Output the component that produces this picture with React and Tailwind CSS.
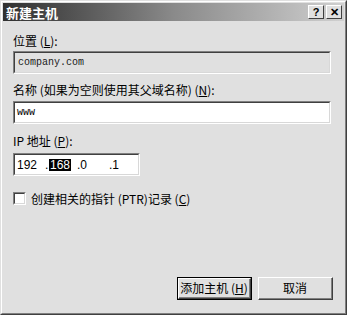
import React from 'react';

const cjk = { fontFamily: '"Noto Sans CJK SC", "Noto Sans", sans-serif' };
const mono = { fontFamily: '"Liberation Mono", "DejaVu Sans Mono", monospace' };

function Sunken({ className = '', children }) {
  return (
    <div className={`border-t border-l border-[#808080] border-b border-r border-b-white border-r-white ${className}`}>
      <div className={`h-full border-t border-l border-[#404040] border-b border-r border-b-[#d8d8d8] border-r-[#d8d8d8]`}>
        {children}
      </div>
    </div>
  );
}

function Btn({ children, def }) {
  return (
    <div className={`w-[75px] h-[23px] ${def ? 'border border-black' : ''}`}>
      <div className="h-full border-t border-l border-white border-b border-r border-b-[#404040] border-r-[#404040]">
        <div className="h-full flex items-center justify-center border-b border-r border-[#808080] text-[12px] text-black" style={cjk}>
          {children}
        </div>
      </div>
    </div>
  );
}

function TitleBtn({ children }) {
  return (
    <div className="w-[16px] h-[14px] bg-[#e0e0e0] border-t border-l border-white border-b border-r border-b-[#404040] border-r-[#404040] flex items-center justify-center text-[11px] font-bold leading-none text-black" style={{ fontFamily: '"Liberation Sans", sans-serif' }}>
      {children}
    </div>
  );
}

export default function App() {
  return (
    <div className="w-[347px] h-[315px] bg-[#e0e0e0] border-t border-l border-[#e0e0e0] border-b border-r border-b-[#404040] border-r-[#404040]">
      <div className="h-full border-t border-l border-white border-b border-r border-b-[#808080] border-r-[#808080] p-[1px] flex flex-col">
        <div className="h-[18px] bg-gradient-to-r from-[#303030] via-[#8a8a8a] to-[#d0d0d0] flex items-center justify-between pl-[3px] pr-[2px]">
          <span className="text-white text-[13px] font-bold leading-none" style={cjk}>新建主机</span>
          <div className="flex gap-[2px]">
            <TitleBtn>?</TitleBtn>
            <TitleBtn>✕</TitleBtn>
          </div>
        </div>

        <div className="flex-1 flex flex-col px-[10px] pt-[14px] text-[12px] text-black leading-none" style={cjk}>
          <div className="h-[14px]">位置 (<u>L</u>):</div>
          <Sunken className="mt-[2px] h-[23px] mr-[3px]">
            <div className="h-full flex items-center pl-[3px] text-[10px] text-[#202020]" style={mono}>company.com</div>
          </Sunken>

          <div className="mt-[10px] h-[14px]">名称 (如果为空则使用其父域名称) (<u>N</u>):</div>
          <Sunken className="mt-[3px] h-[23px] mr-[3px]">
            <div className="h-full bg-white flex items-center pl-[2px] text-[10px]" style={mono}>www</div>
          </Sunken>

          <div className="mt-[11px] h-[14px]">IP 地址 (<u>P</u>):</div>
          <Sunken className="mt-[4px] h-[23px] w-[127px]">
            <div className="h-full bg-white flex items-center pl-[2px] text-[12px]" style={{ fontFamily: '"Liberation Sans", sans-serif' }}>
              <span className="w-[28px]">192</span>
              <span className="w-[4px]">.</span>
              <span className="bg-black text-white px-[1px]">168</span>
              <span className="ml-[6px] w-[32px]">.0</span>
              <span>.1</span>
            </div>
          </Sunken>

          <div className="mt-[16px] flex items-center gap-[5px]">
            <div className="w-[13px] h-[13px] border-t border-l border-[#808080] border-b border-r border-b-white border-r-white">
              <div className="h-full bg-white border-t border-l border-[#404040] border-b border-r border-b-[#d8d8d8] border-r-[#d8d8d8]" />
            </div>
            <span>创建相关的指针 (PTR)记录 (<u>C</u>)</span>
          </div>

          <div className="mt-auto mb-[12px] flex justify-end gap-[6px] mr-[1px]">
            <Btn def>添加主机 (<u>H</u>)</Btn>
            <Btn>取消</Btn>
          </div>
        </div>
      </div>
    </div>
  );
}
